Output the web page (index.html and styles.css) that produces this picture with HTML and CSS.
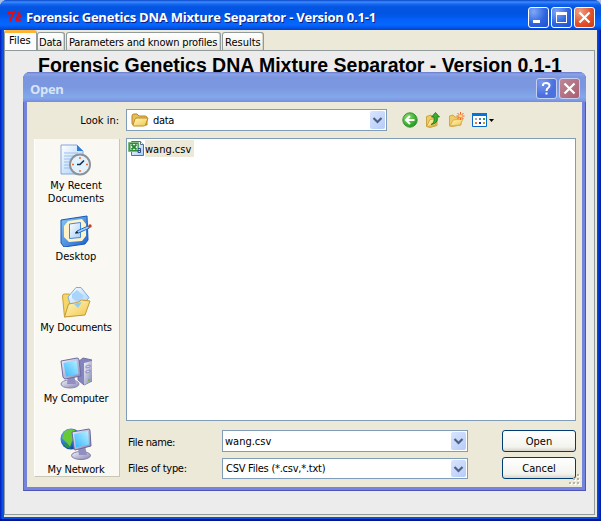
FILE: index.html
```html
<!DOCTYPE html>
<html lang="en">
<head>
<meta charset="utf-8">
<title>Forensic Genetics DNA Mixture Separator - Version 0.1-1</title>
<link rel="stylesheet" href="styles.css">
</head>
<body>
<svg width="0" height="0" class="defs" aria-hidden="true">
  <defs>
    <linearGradient id="gold" x1="0" y1="0" x2="1" y2="1"><stop offset="0" stop-color="#fff8c8"/><stop offset="1" stop-color="#f2c545"/></linearGradient>
    <linearGradient id="screen" x1="0" y1="1" x2="1" y2="0"><stop offset="0" stop-color="#35b5ff"/><stop offset="1" stop-color="#b8f2ff"/></linearGradient>
    <linearGradient id="metal" x1="0" y1="0" x2="1" y2="1"><stop offset="0" stop-color="#f3f3fb"/><stop offset="1" stop-color="#8584b4"/></linearGradient>
    <linearGradient id="paper" x1="0" y1="0" x2="1" y2="1"><stop offset="0" stop-color="#ffffff"/><stop offset="1" stop-color="#a5cdf8"/></linearGradient>
    <linearGradient id="blue" x1="0" y1="0" x2="1" y2="1"><stop offset="0" stop-color="#8cc8f8"/><stop offset="1" stop-color="#1c60c8"/></linearGradient>
    <radialGradient id="green" cx=".35" cy=".3" r=".8"><stop offset="0" stop-color="#8ade69"/><stop offset="1" stop-color="#159415"/></radialGradient>
    <radialGradient id="globe" cx=".3" cy=".3" r=".8"><stop offset="0" stop-color="#62b8ff"/><stop offset="1" stop-color="#0838a0"/></radialGradient>
  </defs>
</svg>
<div class="window">
  <header class="titlebar">
    <svg class="tk" width="16" height="16" viewBox="0 0 16 16" fill="none" stroke="#f00808"><path d="M.5 5.500Q1 3 3 3.300t5-.8" stroke-width="2"/><path d="M6 3.500 3 12.500" stroke-width="2.200"/><path d="M13 1.500q-2.500 4-4 10.500M9.500 8.500q4-4 4-1.500-.5 1.500-3 2l1.500 2.500q1 0 2-1" stroke-width="1.500"/></svg>
    <span class="title">Forensic Genetics DNA Mixture Separator - Version 0.1-1</span>
    <div class="controls">
      <span class="ctl"><svg viewBox="0 0 21 21"><path d="M5 13h7v3H5z" fill="#fff"/></svg></span>
      <span class="ctl"><svg viewBox="0 0 21 21"><path d="M5 5h11v11H5zM6 8v7h9V8z" fill="#fff" fill-rule="evenodd"/></svg></span>
      <span class="ctl close"><svg viewBox="0 0 21 21"><path d="m5.500 5.500 10 10m0-10-10 10" stroke="#fff" stroke-width="2.200"/></svg></span>
    </div>
  </header>
  <nav class="tabs">
    <span class="tab active"><span>Files</span></span>
    <span class="tab data"><span>Data</span></span>
    <span class="tab params"><span>Parameters and known profiles</span></span>
    <span class="tab results"><span>Results</span></span>
  </nav>
  <main class="panel">
    <h1>Forensic Genetics DNA Mixture Separator - Version 0.1-1</h1>
  </main>
</div>

<section class="dialog">
  <header class="dlg-title">
    <span class="dlg-name">Open</span>
    <div class="controls">
      <span class="ctl help"><svg viewBox="0 0 21 21"><path d="M7 8V6.500Q7.500 5 10 5q3.500 0 3.500 2.500 0 1.500-1.500 2.500-1.500 1-1.500 3M10.500 14.500v2" fill="none" stroke="#fff" stroke-width="2"/></svg></span>
      <span class="ctl dim"><svg viewBox="0 0 21 21"><path d="m5.500 5.500 10 10m0-10-10 10" stroke="#fff" stroke-width="2.200"/></svg></span>
    </div>
  </header>
  <div class="dlg-body">
    <label class="look">Look in:</label>
    <div class="topbar">
      <div class="combo lookin">
        <svg width="18" height="16" viewBox="0 0 18 16"><path d="M1 4q0-2 2-2h3l2 2h6q2 0 2 2v7H3q-2 0-2-2z" fill="#e6bf55" stroke="#b48524"/><path d="m2 13 2-6q.5-1 2-1h11l-2.500 7q-.5 1-2 1H3q-1 0-1-1" fill="url(#gold)" stroke="#bd8e25"/></svg>
        <span class="value t-folder">data</span>
        <span class="arrow"><svg viewBox="0 0 14 18"><path d="m3 7 4 4 4-4" fill="none" stroke="#4d6185" stroke-width="2.200"/></svg></span>
      </div>
      <div class="tools">
        <svg width="16" height="16" viewBox="0 0 16 16"><circle cx="8" cy="8" r="7.200" fill="url(#green)" stroke="#399535"/><path d="M12.500 8H4.500M8 4 4 8l4 4" fill="none" stroke="#fff" stroke-width="2"/></svg>
        <svg width="16" height="16" viewBox="0 0 16 16"><path d="M1.500 14.500V4.500L6 3l1 1.500 5 1v8l-7 2z" fill="#f0cc62" stroke="#c9a445"/><path d="m1.500 14.500 3.500-7 8-1-3 7z" fill="url(#gold)" stroke="#d2a944"/><path d="M6 12.500Q10 11 9 5H6.500L10.500.5 14.500 5H12q1.500 6.500-6 7.500" fill="#3bb02c" stroke="#14721a" stroke-width=".8"/></svg>
        <svg width="17" height="16" viewBox="0 0 17 16"><path d="M1.500 14V4L5 3l2 2 6 .5V13l-9 1.500z" fill="#f0cc62" stroke="#d0a848"/><path d="m2 14 3-6 10-1-3 6z" fill="url(#gold)" stroke="#d9b052"/><path d="M12.500 0v8m-4-4h8m-7-3 6 6m0-6-6 6" stroke="#f06425"/><circle cx="12.500" cy="4" r="1.500" fill="#ffe178"/></svg>
        <svg width="24" height="16" viewBox="0 0 24 16"><path d="M.5 1.500h14v13H.5z" fill="#fff" stroke="#0866c9"/><path d="M0 1h15v3H0z" fill="#0872d8"/><path d="M3 6h2v2H3z" fill="#aaa3b6"/><path d="M7 6h2v2H7z" fill="#4e82c8"/><path d="M11 6h2v2h-2z" fill="#28a33b"/><path d="M3 10h2v2H3z" fill="#ec7150"/><path d="M7 10h2v2H7z" fill="#152eae"/><path d="M11 10h2v2h-2z" fill="#c99a16"/><path d="M17 7h5l-2.500 3z" fill="#000"/></svg>
      </div>
    </div>
    <aside class="places">
      <div class="place">
        <svg viewBox="0 0 32 32"><path d="M1 1h16l6 6v23H1z" fill="url(#paper)" stroke="#84a8d8"/><path d="M17 1v6h6z" fill="#2d7ee0"/><path d="M4 9h14M4 12h12M4 15h8M4 18h6M4 21h6M4 24h7" stroke="#98bfee"/><circle cx="20" cy="20.500" r="10" fill="#eef7ff" stroke="#8b9299" stroke-width="2"/><circle cx="20" cy="20.500" r="8" fill="#dff2ff" stroke="#e7eef5"/><path d="M20 13v2m0 11v2m-8-7.500h2m12 0h2" stroke="#f36a2d" stroke-width="1.500"/><path d="m24 16.500-4 4h-3" fill="none" stroke="#17314f" stroke-width="1.700"/></svg>
        <span>My Recent<br>Documents</span>
      </div>
      <div class="place">
        <svg viewBox="0 0 32 32"><path d="m1 5 26-4 1 24-3 4-21 3-3-4z" fill="url(#blue)" stroke="#1658b8"/><path d="m8 6 14-2 4 5v12l-4 5-13 1-5-5V11z" fill="#fff2c6"/><path d="m9.500 9 11-1.500v15l-11 1z" fill="url(#paper)" stroke="#4189db"/><path d="m17 16 11-5 1.500 2-11 5-3 .5z" fill="#9dd2ff" stroke="#286bc1"/><circle cx="30" cy="11" r="1.700" fill="#c94220"/><path d="m15 18 2-2 1.500 2z" fill="#222"/></svg>
        <span>Desktop</span>
      </div>
      <div class="place">
        <svg viewBox="0 0 32 32"><path d="M2.500 10q0-2 2-2h5l3 4 13-1v13L4.500 31z" fill="#f5d666" stroke="#c9a23e"/><path d="m8 11 8-9.500h5l8 10-7 9.500-12-3z" fill="url(#paper)" stroke="#7baeda"/><path d="m12 8 5-4 7 6-6 7-6-5z" fill="#a9d5fc"/><path d="m4.500 31 4-13 9-1.500 4-2.500 8.500 1-5 14z" fill="url(#gold)" stroke="#c39a35"/><path d="m14 18 8-2-4 6z" fill="#8fcdf7"/></svg>
        <span class="tight">My Documents</span>
      </div>
      <div class="place">
        <svg viewBox="0 0 32 32"><path d="m18 5 5-4 9 2v21l-8 4-6-5z" fill="#8585bd" stroke="#7271a4"/><path d="m24 6 8-2v20l-8 4z" fill="url(#metal)"/><path d="m26 9 4-1v2l-4 1zm0 5 4-1v2l-4 1z" fill="#dfe1fa" stroke="#7877aa" stroke-width=".7"/><path d="M28 22h2v2h-2z" fill="#66c53a"/><ellipse cx="10" cy="27" rx="9" ry="4" fill="url(#metal)" stroke="#8985aa"/><path d="m8 19 6-1 2 9H7z" fill="#918fc0"/><path d="m1 4 16-3q2 0 2 2l2 16-16 3q-1 0-2-2z" fill="url(#metal)" stroke="#6e6ca5"/><path d="m3.500 6 13-2.500L18.500 17 6 19.500z" fill="url(#screen)"/></svg>
        <span class="tight">My Computer</span>
      </div>
      <div class="place">
        <svg viewBox="0 0 32 32"><circle cx="11" cy="11" r="10.500" fill="url(#globe)"/><path d="m5 3 5-2 5 1-2 5 3 3-4 3-2 6-3-4-5-5z" fill="#67c936"/><path d="m3 15 5 2 3 4-5-2z" fill="#289744"/><ellipse cx="21" cy="27.500" rx="9.500" ry="4" fill="url(#metal)" stroke="#807da4"/><path d="m18 20 7-2 2 9h-8z" fill="#918fc0"/><path d="m12 4 17-3q1 0 1 2l1 15-16 4q-1 0-1-2z" fill="url(#metal)" stroke="#66679d"/><path d="m14 6 14-3 1 13.500-13 3z" fill="url(#screen)"/></svg>
        <span class="tight">My Network</span>
      </div>
    </aside>
    <div class="list">
      <div class="file">
        <svg width="16" height="16" viewBox="0 0 16 16"><path d="M3.500 1.500h9l3 3v11h-12z" fill="url(#paper)" stroke="#566f98"/><path d="M12.500 1.500v3h3" fill="#fff" stroke="#566f98"/><path d="M.5 2.500h10v9H.5z" fill="#58ae57" stroke="#7fb87f"/><path d="M2 3.500h8v7H2z" fill="#eef8ea" stroke="#2f8a3c"/><path d="m3.500 4.500 5 5m0-5-5 5" stroke="#218a34" stroke-width="1.800"/><path d="M10 8.500h2.500v4H10v-2h2.500" fill="none" stroke="#324d83"/></svg>
        <span class="fname">wang.csv</span>
      </div>
    </div>
    <div class="fields">
      <label class="l-name">File name:</label>
      <div class="combo"><span class="value t-name">wang.csv</span><span class="arrow"><svg viewBox="0 0 14 18"><path d="m3 7 4 4 4-4" fill="none" stroke="#4d6185" stroke-width="2.200"/></svg></span></div>
      <button>Open</button>
      <label class="l-type">Files of type:</label>
      <div class="combo type"><span class="value t-type">CSV Files (*.csv,*.txt)</span><span class="arrow"><svg viewBox="0 0 14 18"><path d="m3 7 4 4 4-4" fill="none" stroke="#4d6185" stroke-width="2.200"/></svg></span></div>
      <button class="cancel">Cancel</button>
    </div>
    <svg class="grip" width="12" height="12" viewBox="0 0 12 12"><path d="M9 1h2v2H9zM5 5h2v2H5zm4 0h2v2H9zM1 9h2v2H1zm4 0h2v2H5zm4 0h2v2H9z" fill="#fff"/><path d="M8 0h2v2H8zM4 4h2v2H4zm4 0h2v2H8zM0 8h2v2H0zm4 0h2v2H4zm4 0h2v2H8z" fill="#b8b4a3"/></svg>
  </div>
</section>
</body>
</html>
```
FILE: styles.css
```css
* { box-sizing: border-box; }
body {
  margin: 0;
  position: relative;
  width: 601px;
  height: 521px;
  overflow: hidden;
  background: #a9bfe8;
  color: #000;
  font: 11px/13px "DejaVu Sans Condensed", "DejaVu Sans", sans-serif;
  font-stretch: condensed;
  white-space: nowrap;
}
svg { display: block; flex: none; }
.defs { position: absolute; }

.window {
  display: flex;
  flex-direction: column;
  width: 601px;
  height: 521px;
  padding: 0 4px 4px;
  border-radius: 7px 7px 0 0;
  background: linear-gradient(90deg, #0018b0 0, #0831d9 1px, #0a5be8 3px, #0650e0 4px, #0650e0 597px, #0344dc 598px, #0016a5 601px);
  box-shadow: inset 0 -2px #00138c;
}
.titlebar {
  display: flex;
  align-items: center;
  flex: none;
  height: 30px;
  margin: 0 -4px;
  padding: 4px 6px 0 7px;
  border-radius: 7px 7px 0 0;
  background: linear-gradient(#0a45c8 0, #3c8cff 2px, #1669f0 4px, #0455e2 7px, #0054e3 14px, #0461fa 20px, #0667ff 25px, #0359ee 27px, #0042ce 30px);
}
.tk { margin-right: 3px; }
.title {
  flex: 1;
  color: #fff;
  font: bold 13px/16px "Open Sans", "Noto Sans", sans-serif;
  letter-spacing: -.23px;
  text-shadow: 1px 1px #0f1f7e;
}
.controls { display: flex; gap: 2px; }
.ctl {
  width: 21px;
  height: 21px;
  border: 1px solid #fff;
  border-radius: 3px;
  background: radial-gradient(circle at 25% 20%, #7fa8f7, #2f65e0 55%, #1b4fd2);
}
.ctl svg { width: 21px; height: 21px; margin: -1px; }
.ctl.close { background: radial-gradient(circle at 25% 20%, #f3a184, #e2532b 55%, #cb3c12); }
.tabs {
  display: flex;
  align-items: flex-end;
  flex: none;
  height: 20px;
  background: #ece9d8;
  line-height: 16px;
}
.tab {
  height: 18px;
  padding: 2px 0 0 2px;
  border: 1px solid #919b9c;
  border-bottom: 0;
  border-radius: 3px 3px 0 0;
  background: linear-gradient(#fff, #f3f2ec 75%, #e4e1d4);
  box-shadow: inset -1px 0 #d7d4c7;
}
.tab.active {
  position: relative;
  width: 33px;
  height: 21px;
  margin-bottom: -1px;
  padding: 0 0 0 4px;
  border-top: 3px solid #ffb432;
  background: #fcfcfe;
  box-shadow: none;
}
.tab.data { width: 28px; margin-right: 1px; padding-left: 1px; letter-spacing: -.2px; }
.tab.params { width: 155px; margin-right: 1px; letter-spacing: -.18px; }
.tab.results { width: 42px; }
.panel {
  flex: 1;
  margin: 0 2px 2px 0;
  border: 1px solid #919b9c;
  background: #ececec;
  box-shadow: 0 0 0 3px #ece9d8;
  clip-path: inset(0 -2px -2px 0);
  overflow: hidden;
}
h1 {
  margin: 3px 0 0 33px;
  font: bold 19.5px/22px "Liberation Sans", sans-serif;
  letter-spacing: -.02px;
}

.dialog {
  position: absolute;
  left: 23px;
  top: 72px;
  width: 563px;
  height: 419px;
  padding: 0 4px 4px;
  border-radius: 7px 7px 0 0;
  background: #7484dc;
  box-shadow: inset 1px 0 #6063c8, inset -1px -1px #5053b8;
}
.dlg-title {
  display: flex;
  align-items: center;
  height: 30px;
  margin: 0 -4px;
  padding: 3px 6px 0 7px;
  border-radius: 7px 7px 0 0;
  background: linear-gradient(#6878cc 0, #8ba4e8 2px, #7b96df 5px, #7a97e0 15px, #82a8ea 25px, #7f9be4 28px, #7389db 30px);
}
.dlg-name {
  flex: 1;
  color: #d8e4f8;
  font: bold 13px/16px "Open Sans", "Noto Sans", sans-serif;
  letter-spacing: -.3px;
}
.dialog .ctl { border-color: #c5d0f0; }
.ctl.help { background: radial-gradient(circle at 25% 20%, #7b9bee, #4a70e0 60%, #4c72dd); }
.ctl.dim { background: linear-gradient(135deg, #bd8798, #ab5f70); }
.dialog .controls { gap: 2px; }
.dlg-body {
  position: relative;
  display: grid;
  grid-template: 22px 283px 50px / 86px 450px;
  gap: 7px 6px;
  height: 385px;
  padding: 7px 6px 0 7px;
  background: #ece9d8;
}
.look { padding: 5px 1px 0 0; text-align: right; }
.topbar { display: flex; align-items: center; }
.combo {
  display: flex;
  align-items: center;
  height: 22px;
  padding: 1px;
  border: 1px solid #7f9db9;
  background: #fff;
}
.type { height: 21px; }
.lookin { width: 261px; padding-left: 4px; }
.value { flex: 1; padding-left: 2px; }
.t-name { padding-left: 1px; }
.t-folder { padding-left: 4px; letter-spacing: -.3px; }
.t-type { letter-spacing: -.25px; }
.arrow {
  width: 15px;
  height: 100%;
  border-radius: 2px;
  background: linear-gradient(135deg, #d9e5ff, #b6cbf8);
}
.arrow svg { width: 15px; height: 18px; }
.tools { display: flex; gap: 7px; margin-left: 15px; }
.places {
  grid-row: 2 / 4;
  height: 338px;
  margin-top: 1px;
  padding-top: 5px;
  border: solid #c9c6b8;
  border-width: 0 1px 1px 0;
  border-left: 1px solid #fff;
  background: #f9f8f3;
  overflow: hidden;
}
.place {
  display: flex;
  flex-direction: column;
  align-items: center;
  height: 71px;
  padding-right: 2px;
  text-align: center;
}
.place svg { width: 32px; height: 32px; margin-bottom: 3px; }
.tight { letter-spacing: -.2px; }
.list { padding: 1px; border: 1px solid #7f9db9; background: #fff; }
.file { display: flex; }
.fname {
  width: 49px;
  height: 17px;
  margin-left: 1px;
  padding: 3px 0 0 0;
  background: #ece9d8;
}
.fields {
  display: grid;
  grid-template: 22px 22px / 96px 246px 73px;
  gap: 6px 0;
  justify-content: start;
  margin-top: 2px;
}
.fields label { padding: 6px 0 0 2px; letter-spacing: -.4px; }
.fields .l-type { padding-top: 4px; letter-spacing: -.3px; }
.fields button {
  height: 22px;
  margin: 0 0 0 34px;
  width: 74px;
  padding: 0;
  border: 1px solid #003c74;
  border-radius: 3px;
  background: linear-gradient(#fff, #f3f3ee 80%, #d8d4c8);
  color: #000;
  font: inherit;
}
.fields .cancel { margin-top: -1px; }
.grip { position: absolute; right: 1px; bottom: 1px; }
```
